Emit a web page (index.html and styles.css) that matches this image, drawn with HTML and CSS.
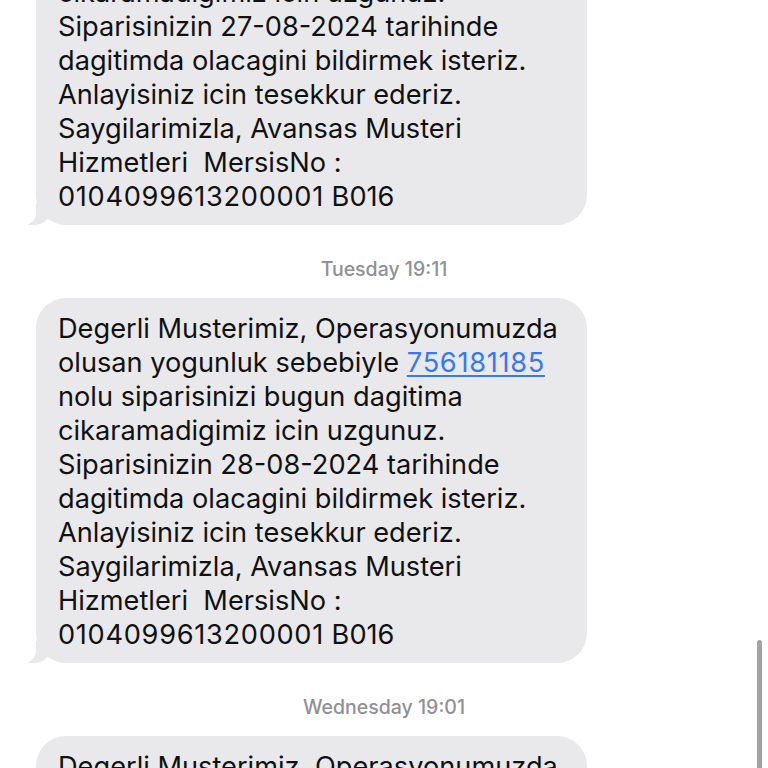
FILE: index.html
```html
<!DOCTYPE html>
<html>
<head>
<meta charset="utf-8">
<link rel="stylesheet" href="styles.css">
</head>
<body>
<div class="screen">
  <div class="thread">
    <div class="bubble tail"><div class="text">Degerli Musterimiz, Operasyonumuzda
olusan yogunluk sebebiyle <a class="link">756181185</a>
nolu siparisinizi bugun dagitima
cikaramadigimiz icin uzgunuz.
Siparisinizin 27-08-2024 tarihinde
dagitimda olacagini bildirmek isteriz.
Anlayisiniz icin tesekkur ederiz.
Saygilarimizla, Avansas Musteri
Hizmetleri  MersisNo :
<span class="num">0104099613200001</span> B016</div></div>
    <div class="stamp">Tuesday 19:11</div>
    <div class="bubble tail"><div class="text">Degerli Musterimiz, Operasyonumuzda
olusan yogunluk sebebiyle <a class="link">756181185</a>
nolu siparisinizi bugun dagitima
cikaramadigimiz icin uzgunuz.
Siparisinizin 28-08-2024 tarihinde
dagitimda olacagini bildirmek isteriz.
Anlayisiniz icin tesekkur ederiz.
Saygilarimizla, Avansas Musteri
Hizmetleri  MersisNo :
<span class="num">0104099613200001</span> B016</div></div>
    <div class="stamp">Wednesday 19:01</div>
    <div class="bubble"><div class="text">Degerli Musterimiz, Operasyonumuzda
olusan yogunluk sebebiyle <a class="link">756181185</a>
nolu siparisinizi bugun dagitima</div></div>
  </div>
  <div class="scrollbar"></div>
</div>
</body>
</html>
```
FILE: styles.css
```css
html, body {
  margin: 0;
  padding: 0;
  background: #ffffff;
}
.screen {
  position: relative;
  width: 768px;
  height: 768px;
  overflow: hidden;
  font-family: "Inter", "Liberation Sans", sans-serif;
}
.thread {
  display: flex;
  flex-direction: column;
  align-items: flex-start;
  margin-top: -140px;
  padding-left: 36px;
}
.bubble {
  position: relative;
  box-sizing: border-box;
  width: 551px;
  padding: 14px 20px 11px 22px;
  background: #e9e9eb;
  border-radius: 30px;
}
.bubble.tail::before {
  content: "";
  position: absolute;
  left: -8px;
  bottom: 0;
  width: 24px;
  height: 22px;
  background: #e9e9eb;
  border-bottom-right-radius: 18px;
}
.bubble.tail::after {
  content: "";
  position: absolute;
  left: -14px;
  bottom: 0;
  width: 14px;
  height: 24px;
  background: #ffffff;
  border-bottom-right-radius: 12px;
}
.text {
  position: relative;
  z-index: 1;
  white-space: pre;
  font-size: 27.2px;
  line-height: 34px;
  color: #111111;
}
.num {
  letter-spacing: 0.7px;
}
.link {
  color: #3478f6;
  letter-spacing: 0.7px;
  text-decoration: underline;
  text-decoration-thickness: 1.5px;
  text-underline-offset: 3px;
}
.stamp {
  align-self: stretch;
  margin: 34px 36px 19px 0;
  text-align: center;
  font-size: 19.5px;
  line-height: 20px;
  font-weight: 500;
  color: #909095;
}
.scrollbar {
  position: absolute;
  left: 757px;
  top: 640px;
  width: 5px;
  height: 140px;
  border-radius: 3px;
  background: #a3a3a3;
}
```
